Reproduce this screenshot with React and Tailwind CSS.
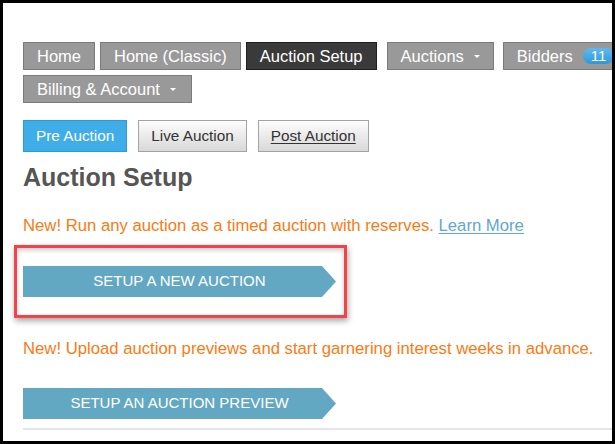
import React from "react";

const Caret = () => (
    <svg viewBox="0 0 6 3" width="6" height="3" className="ml-[10px] shrink-0" aria-hidden="true">
        <polygon points="0,0 6,0 3,3" fill="#ffffff" />
    </svg>
);

const NavButton = ({ children, active, caret, className = "" }) => (
    <div
        className={`h-[28px] flex items-center px-[13px] border text-[16.5px] text-white whitespace-nowrap shrink-0 ${
            active ? "bg-[#3a3a3a] border-[#1f1f1f]" : "bg-[#999999] border-[#7b7b7b]"
        } ${className}`}
    >
        {children}
        {caret && <Caret />}
    </div>
);

const Tab = ({ children, active, underline }) => (
    <div
        className={`h-[32px] flex items-center px-[12px] border text-[15.3px] whitespace-nowrap ${
            active
                ? "bg-[#3fade8] border-[#2d9ad6] text-white"
                : "bg-gradient-to-b from-[#fdfdfd] to-[#d8d8d8] border-[#a3a3a3] text-[#333333]"
        } ${underline ? "underline underline-offset-2" : ""}`}
    >
        {children}
    </div>
);

const ArrowButton = ({ children }) => (
    <div className="w-[313px] h-[31px] bg-[#63a8c3] flex items-center justify-center text-white text-[15px] [clip-path:polygon(0_0,calc(100%-14px)_0,100%_50%,calc(100%-14px)_100%,0_100%)]">
        {children}
    </div>
);

export default function App() {
    return (
        <div className="w-[615px] h-[444px] bg-black p-[3px] font-[family-name:Liberation_Sans,Arial,sans-serif]">
            <div className="w-full h-full bg-white overflow-hidden pl-[20px] pt-[39px]">
                {/* Main nav */}
                <div className="flex items-center whitespace-nowrap">
                    <NavButton>Home</NavButton>
                    <NavButton className="ml-[5px]">Home (Classic)</NavButton>
                    <NavButton active className="ml-[5px]">Auction Setup</NavButton>
                    <NavButton caret className="ml-[10px]">Auctions</NavButton>
                    <NavButton className="ml-[9px]">
                        Bidders
                        <span className="ml-[10px] h-[16px] px-[8px] rounded-full bg-gradient-to-b from-[#5dbaf0] to-[#2f98d8] text-white text-[15px] leading-[16px] flex items-center">
                            11
                        </span>
                    </NavButton>
                </div>
                <div className="flex mt-[5px]">
                    <NavButton caret className="pr-[15px]">Billing &amp; Account</NavButton>
                </div>

                {/* Sub tabs */}
                <div className="flex gap-[11px] mt-[17px]">
                    <Tab active>Pre Auction</Tab>
                    <Tab>Live Auction</Tab>
                    <Tab underline>Post Auction</Tab>
                </div>

                <h1 className="mt-[11px] text-[25px] leading-[28px] font-bold text-[#555555]">Auction Setup</h1>

                <p className="mt-[25px] text-[16.7px] leading-[20px] text-[#fb7a12] whitespace-nowrap">
                    New! Run any auction as a timed auction with reserves.{" "}
                    <span className="text-[#5fa9ca] underline underline-offset-2">Learn More</span>
                </p>

                <div className="relative mt-[30px] w-[313px]">
                    <ArrowButton>SETUP A NEW AUCTION</ArrowButton>
                    {/* annotation box */}
                    <div className="absolute left-[-9px] top-[-21px] w-[333px] h-[73px] border-[3px] border-[#f2434a] shadow-[1px_3px_6px_rgba(0,0,0,0.35),inset_0_2px_5px_rgba(0,0,0,0.22)] pointer-events-none" />
                </div>

                <p className="mt-[42px] text-[16.7px] leading-[20px] text-[#fb7a12] whitespace-nowrap">
                    New! Upload auction previews and start garnering interest weeks in advance.
                </p>

                <div className="mt-[29px]">
                    <ArrowButton>SETUP AN AUCTION PREVIEW</ArrowButton>
                </div>

                <div className="mt-[9px] h-[2px] bg-[#e6e6e6]" />
            </div>
        </div>
    );
}
